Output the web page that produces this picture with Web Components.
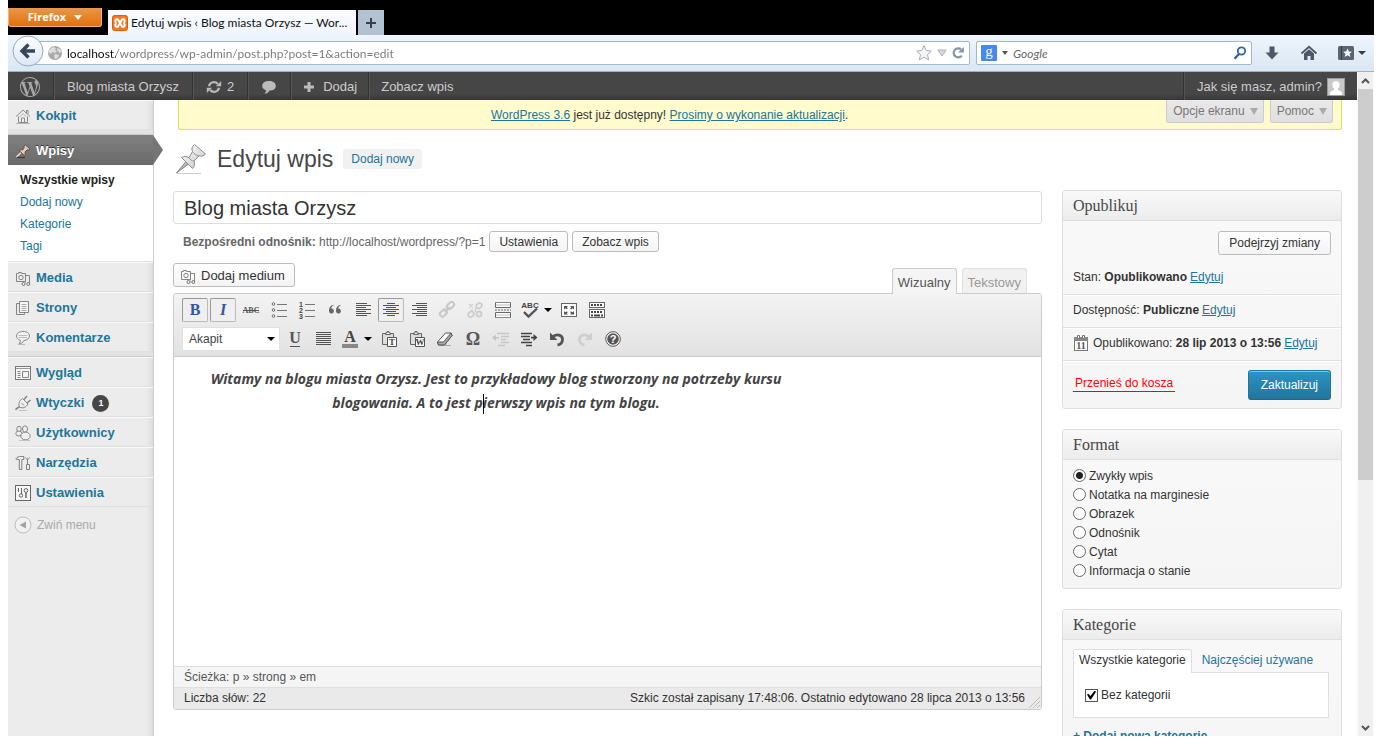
<!DOCTYPE html>
<html lang="pl">
<head>
<meta charset="utf-8">
<title>Edytuj wpis ‹ Blog miasta Orzysz — WordPress</title>
<style>
html { background: #fff; }
body { margin: 0 8px 8px; height: calc(100vh - 8px); overflow: hidden; font: 12px/16px "Liberation Sans", Arial, sans-serif; color: #333; }
</style>
</head>
<body>
<blog-desktop></blog-desktop>
<script>
const BASE = `
*, *::before, *::after { box-sizing: border-box; }
:host([hidden]) { display: none; }
button, input, select { font: inherit; color: inherit; margin: 0; }
button { cursor: pointer; padding: 0; border: 0; background: none; }
a { color: #21759b; }
ul { list-style: none; margin: 0; padding: 0; }
h1, h2, p { margin: 0; font-weight: normal; }
ui-icon { flex: none; }
.btn { height: 24px; padding: 0 10px; border: 1px solid #bbb; border-radius: 3px; color: #333; white-space: nowrap;
  background: linear-gradient(#fefefe, #f4f4f4); box-shadow: inset 0 1px 0 #fff; }
`;
function define(tag, css, html, init) {
  const tpl = document.createElement('template');
  tpl.innerHTML = `<style>${BASE}${css}</style>${html}`;
  customElements.define(tag, class extends HTMLElement {
    constructor() {
      super();
      this.attachShadow({ mode: 'open' }).append(tpl.content.cloneNode(true));
    }
    connectedCallback() { if (init) init.call(this, this.shadowRoot); }
  });
}

/* Rows of horizontal bars used by the alignment icons: [x, width] per line. */
const bars = (rows, color) => rows.map(([x, w], i) => `<rect x="${x}" y="${i * 2 + 1}" width="${w}" height="1" fill="${color}"/>`).join('');
const glyph = (w, h, body) => ({ w, h, body });
const serif = 'font-family="Liberation Serif, serif" font-weight="bold" text-anchor="middle"';
const sans = 'font-family="Liberation Sans, sans-serif" font-weight="bold" text-anchor="middle"';
const ICONS = {
  wordpress: glyph(20, 20, `<path transform="scale(.8333)" fill="#a9a9a9" d="M21.469 6.825c.84 1.537 1.318 3.3 1.318 5.175 0 3.979-2.156 7.456-5.363 9.325l3.295-9.527c.615-1.54.82-2.771.82-3.864 0-.405-.026-.78-.07-1.11m-7.981.105c.647-.03 1.232-.105 1.232-.105.582-.075.514-.93-.067-.899 0 0-1.755.135-2.88.135-1.064 0-2.85-.15-2.85-.15-.585-.03-.661.855-.075.885 0 0 .54.061 1.125.09l1.68 4.605-2.37 7.08L5.354 6.9c.649-.03 1.234-.1 1.234-.1.585-.075.516-.93-.065-.896 0 0-1.746.138-2.874.138-.2 0-.438-.008-.69-.015C4.911 3.15 8.235 1.215 12 1.215c2.809 0 5.365 1.072 7.286 2.833-.046-.003-.091-.009-.141-.009-1.06 0-1.812.923-1.812 1.914 0 .89.513 1.643 1.06 2.531.411.72.89 1.643.89 2.977 0 .915-.354 1.994-.821 3.479l-1.075 3.585-3.9-11.61.001.014zM12 22.784c-1.059 0-2.081-.153-3.048-.437l3.237-9.406 3.315 9.087c.024.053.05.101.078.149-1.12.393-2.325.609-3.582.609M1.211 12c0-1.564.336-3.05.935-4.39L7.29 21.709C3.694 19.96 1.212 16.271 1.211 12M12 0C5.385 0 0 5.385 0 12s5.385 12 12 12 12-5.385 12-12S18.615 0 12 0"/>`),
  refresh: glyph(16, 14, `<g fill="none" stroke="#b8b8b8" stroke-width="2.2"><path d="M3 6.2A5 5 0 0 1 11.8 4"/><path d="M13 7.8A5 5 0 0 1 4.2 10"/></g><path fill="#b8b8b8" d="M9.8 6.2h5.4V.9zM6.2 7.8H.8v5.3z"/>`),
  comment: glyph(16, 14, `<path fill="#bbb" d="M8 1c4 0 6.800 2 6.800 4.900S12 10.500 8.400 10.600C7.600 12.500 6 13.600 3.600 13.800 4.600 12.800 5 11.500 4.900 10.100 2.600 9.400 1.200 7.900 1.200 5.900 1.200 3 4 1 8 1z"/>`),
  plus: glyph(12, 12, `<path fill="#bbb" d="M4.500 1h3v3.500H11v3H7.500V11h-3V7.500H1v-3h3.500z"/>`),
  avatar: glyph(18, 18, `<rect width="18" height="18" fill="#9a9a9a"/><rect x="1" y="1" width="16" height="16" fill="#c9c9c9"/><path fill="#fff" d="M9 3c2.300 0 3.600 1.500 3.600 3.800 0 1.700-.6 3-1.600 3.800v1.200c0 .6 4 1.200 4 3.600V17H3v-1.600c0-2.400 4-3 4-3.600v-1.200C6 9.800 5.400 8.500 5.400 6.800 5.400 4.500 6.700 3 9 3z"/>`),
  xampp: glyph(16, 16, `<rect x=".5" y=".5" width="15" height="15" rx="2" fill="#f47920" stroke="#d95f10"/><path fill="none" stroke="#fff" stroke-width="2" stroke-linejoin="round" d="M6 4.500c-2.500-1-3.500 1-2 3.500-1.500 2.500-.5 4.500 2 3.500L10 4.500c2.500-1 3.500 1 2 3.500 1.500 2.500.5 4.500-2 3.500z"/>`),
  back: glyph(32, 32, `<defs><linearGradient id="g" x2="0" y2="1"><stop stop-color="#fdfeff"/><stop offset="1" stop-color="#dce7f4"/></linearGradient></defs><circle cx="16" cy="16" r="15" fill="url(#g)" stroke="#93a9c0"/><path fill="none" stroke="#36475a" stroke-width="3.400" d="M16.500 9.500l-6.500 6.500 6.500 6.500M10 16h13"/>`),
  globe: glyph(16, 16, `<circle cx="8" cy="8" r="7" fill="#a9a9a9"/><path fill="#dedede" d="M3 4l3-2 3 1-1 2 2 1-2 2-3-1-1 2-3-2zM10 3l3 1 1.500 3-2 1-2-2zM8 9l4 1-1 3-3 1-1-3z"/>`),
  star: glyph(18, 18, `<path fill="#f3f5f7" stroke="#a7afb8" d="M9 1.500l2.200 5 5.300.5-4 3.600 1.200 5.400L9 13.200 4.300 16l1.200-5.400-4-3.600 5.300-.5z"/>`),
  dropdown: glyph(10, 8, `<path fill="#d5dbe2" stroke="#a9b3bf" d="M.8 1h8.400L5 7z"/>`),
  reload: glyph(14, 14, `<path fill="none" stroke="#8794a4" stroke-width="2.200" d="M10.800 9.600A4.500 4.500 0 1 1 10 3.400"/><path fill="#8794a4" d="M7 6.600h5.900V1z"/>`),
  caret: glyph(6, 4, `<path fill="#555" d="M0 0h6L3 4z"/>`),
  caretdark: glyph(8, 4, `<path fill="#333d48" d="M0 0h8L4 4z"/>`),
  caretwhite: glyph(8, 5, `<path fill="#fff" d="M0 0h8L4 5z"/>`),
  caretgrey: glyph(8, 7, `<path fill="#aaa" d="M0 0h8L4 7z"/>`),
  caretblack: glyph(8, 4, `<path fill="#000" d="M0 0h8L4 4z"/>`),
  google: glyph(16, 16, `<rect width="16" height="16" rx="1" fill="#4787f0"/><text x="8" y="11" font-family="Liberation Serif, serif" text-anchor="middle" font-size="15" fill="#fff">g</text>`),
  search: glyph(14, 14, `<circle cx="8.500" cy="5" r="3.700" fill="none" stroke="#2c66a5" stroke-width="1.800"/><path stroke="#2c66a5" stroke-width="2.400" d="M6 8L1.500 12.800"/>`),
  download: glyph(16, 16, `<path fill="#4d5866" d="M5.500 1.500h5v6h4L8 14.500 1.500 7.500h4z"/>`),
  home: glyph(18, 16, `<path fill="none" stroke="#4d5866" stroke-width="1.800" d="M1.500 8.500L9 1.800l7.500 6.700"/><path fill="#4d5866" d="M4 8.500l5-4.200 5 4.200V15h-3.500v-4h-3v4H4z"/>`),
  bookmarks: glyph(16, 14, `<rect width="16" height="14" rx="1.500" fill="#5a6572"/><path stroke="#333d48" d="M3.500 0v14"/><path fill="#fff" d="M9.500 2.500l1.300 3 3.200.2-2.500 2 .9 3.200-2.900-1.700-2.800 1.700.8-3.200-2.400-2 3.200-.2z"/>`),
  newtab: glyph(12, 12, `<path fill="#36414d" d="M5 1h2v4h4v2H7v4H5V7H1V5h4z"/>`),
  dashboard: glyph(16, 16, `<g fill="none" stroke="#8a8a8a"><path d="M1 8.500L8 2l7 6.500"/><path d="M3.500 8.500v6h9v-6M6.500 14v-4h3v4M11.500 5V2.500h1.500V6"/><path d="M4.500 9L8 5.500 11.500 9" stroke="#b5b5b5"/></g><path stroke="#b5b5b5" d="M1 15.500h14"/>`),
  pinsmall: glyph(16, 16, `<path stroke="#f0e2dd" stroke-width="1.400" d="M1.500 14L6 9.500"/><path fill="#e6c9c1" stroke="#4c3b39" stroke-width=".8" d="M4 7.300c1.500-.8 2.600-.6 3.500-.2L9.200 4.800c-.4-1.200 0-2.200.9-3L15 6c-.8.900-1.800 1.100-2.800.8L9.900 9.100c.5 1.200.4 2.400-.5 3.500z"/><path stroke="#3d3432" stroke-width="1.200" d="M2 14.500h8"/>`),
  pinlarge: glyph(32, 32, `<defs><linearGradient id="p" x2="1" y2="1"><stop stop-color="#fff"/><stop offset="1" stop-color="#c4c4c4"/></linearGradient></defs><path fill="#bbb" stroke="#6f6f6f" stroke-width=".8" d="M1.500 30L11 18.500l2.500 2.500z"/><path fill="url(#p)" stroke="#8b8b8b" d="M6.500 14.500c3-1.500 5-1.300 7.500.2L17.500 8.500c-1.200-2.600-.5-5 2-7L30.500 11c-1.800 2-4 2.600-6.500 1.800L19 18c1 2.800.6 5-1.500 7.500z"/><path stroke="#999" fill="none" d="M17.500 8.500c1.500 2.500 3.500 3.800 6.500 4.300M14 14.700c1 2 2.500 3 5 3.300"/><path stroke="#ccc" d="M2 30.500h24"/>`),
  media: glyph(16, 16, `<g fill="none" stroke="#858585"><path d="M1.500 3.500h2v-1h3v1h4v8h-9z"/><circle cx="6" cy="7.500" r="2.200"/><path d="M10.500 5.500h4v8M10.500 12.500v-1"/></g><g fill="#eee" stroke="#777"><circle cx="8.500" cy="14" r="1.500"/><circle cx="13.300" cy="14" r="1.500"/></g>`),
  pages: glyph(16, 16, `<g fill="#e9e9e9" stroke="#858585"><path d="M1.500 3.500h8v11h-8z"/><path d="M4.500 1.500h9v11h-9z" fill="#f6f6f6"/></g><path stroke="#a9a9a9" d="M6.500 4.500h5M6.500 6.500h5M6.500 8.500h5M6.500 10.500h5"/>`),
  comments: glyph(16, 16, `<path fill="#f2f2f2" stroke="#888" d="M8 1.500c4 0 6.500 1.800 6.500 4.400S12 10.400 8.800 10.500C8 12.500 6.500 13.600 4 14c1-1.200 1.400-2.300 1.300-3.800C3 9.500 1.500 8 1.500 5.900 1.500 3.300 4 1.500 8 1.500z"/><path stroke="#bbb" d="M3.500 5.500h9M4 7.500h8M3 14.500h7"/>`),
  appearance: glyph(16, 16, `<rect x=".5" y="1.500" width="15" height="13" fill="#f6f6f6" stroke="#777"/><path stroke="#999" d="M1 3.500h14"/><g fill="none" stroke="#858585"><path d="M2.500 6.500h3M2.500 8.500h3M2.500 10.500h3M2.500 12.500h3"/><path d="M7.500 6.500h6v6h-6z"/></g>`),
  plugins: glyph(16, 16, `<g fill="none" stroke="#858585"><path stroke-width="1.600" d="M.8 15c.4-2.500 2-1.500 3.700-3.500"/><path fill="#f0f0f0" d="M4.500 12C3 8.500 4.500 5.500 7.500 3.500L13 9c-2 3.500-5 4.800-8.500 3z"/><path stroke-width="1.500" d="M9 4.500L12 1M12 8l3.500-3"/><path d="M6.500 8l2.500 2.500"/></g><path stroke="#c3c3c3" d="M4 15.500h8"/>`),
  users: glyph(16, 16, `<g fill="#f0f0f0" stroke="#858585"><ellipse cx="4" cy="4" rx="2.200" ry="2.700"/><ellipse cx="3.800" cy="8.500" rx="3" ry="2.500"/><ellipse cx="10" cy="4" rx="2.500" ry="3.200"/><ellipse cx="10.500" cy="11" rx="4.700" ry="3.800"/></g><path stroke="#c3c3c3" d="M4 15.500h11"/>`),
  tools: glyph(16, 16, `<g fill="#eee" stroke="#808080"><path d="M.8 4c1-2 3-2.500 5-2.500h3v3h-2v10h-2.500v-10H3z"/><path d="M12.500 9V2.500M11.500 9.500h3v5h-3z"/><path d="M10.500 2.500c0 2 4 2 4 0"/></g>`),
  settings: glyph(16, 16, `<rect x=".5" y=".5" width="15" height="15" fill="#f6f6f6" stroke="#666"/><g fill="none" stroke="#666"><path d="M3.500 3v4M6.500 3v6"/><circle cx="6" cy="10.500" r="1.700"/><circle cx="11" cy="5.500" r="1.900"/><path d="M11 7.500V13" stroke-width="1.500"/></g>`),
  collapse: glyph(18, 18, `<circle cx="9" cy="9" r="8" fill="#f1f1f1" stroke="#bdbdbd"/><path fill="#a3a3a3" d="M12 5.500v7L5.500 9z"/>`),
  calendar: glyph(16, 18, `<rect x="1.500" y="4.500" width="13" height="12" fill="#fff" stroke="#777"/><rect x="1" y="3" width="14" height="4" fill="#888"/><path stroke="#777" fill="#fff" d="M4.500 1.500h2v3h-2zM9.500 1.500h2v3h-2z"/><text x="8" y="15" ${serif} font-size="10" fill="#555">11</text>`),
  scrollup: glyph(9, 6, `<path fill="none" stroke="#555" stroke-width="2" d="M1 5l3.500-3.500L8 5"/>`),
  scrolldown: glyph(9, 6, `<path fill="none" stroke="#555" stroke-width="2" d="M1 1l3.500 3.500L8 1"/>`),
  grip: glyph(12, 12, `<path stroke="#bbb" d="M1 12L12 1M5 12l7-7M9 12l3-3"/>`),
  bold: glyph(20, 20, `<text x="10" y="15" ${serif} font-size="16" fill="#3455a4">B</text>`),
  italic: glyph(20, 20, `<text x="10" y="15" ${serif} font-style="italic" font-size="16" fill="#3455a4">I</text>`),
  strike: glyph(20, 20, `<text x="10" y="13" ${serif} font-size="8" fill="#555">ABC</text><path stroke="#555" d="M2 10.500h16"/>`),
  bullets: glyph(20, 20, `<g fill="#fff" stroke="#666"><circle cx="4.500" cy="4" r="1.300"/><circle cx="4.500" cy="10" r="1.300"/><circle cx="4.500" cy="16" r="1.300"/></g><path stroke="#777" d="M8 4.500h10M8 10.500h10M8 16.500h10"/>`),
  numbers: glyph(20, 20, `<g font-size="7" fill="#444" ${sans}><text x="4" y="7">1</text><text x="4" y="13">2</text><text x="4" y="19">3</text></g><path stroke="#777" d="M8 4.500h10M8 10.500h10M8 16.500h10"/>`),
  quote: glyph(20, 20, `<path fill="#666" d="M8.500 5.500c-1.500.5-2.200 1.600-2.200 3 1.700 0 2.600 1 2.600 2.400S7.900 13.500 6.500 13.500C4.800 13.500 4 12.200 4 10.500c0-2.900 1.600-5 4.500-5.700zM15.500 5.500c-1.500.5-2.200 1.600-2.200 3 1.700 0 2.600 1 2.600 2.400s-1 2.600-2.400 2.600c-1.700 0-2.500-1.300-2.500-3 0-2.900 1.600-5 4.500-5.700z"/>`),
  left: glyph(16, 16, bars([[1, 11], [1, 15], [1, 10], [1, 15], [1, 10], [1, 15], [1, 11]], '#555')),
  center: glyph(16, 16, bars([[4, 8], [0, 16], [3, 10], [0, 16], [3, 10], [0, 16], [4, 8]], '#2f56ae')),
  right: glyph(16, 16, bars([[5, 11], [1, 15], [6, 10], [1, 15], [6, 10], [1, 15], [5, 11]], '#555')),
  justify: glyph(16, 16, bars([[1, 15], [1, 15], [1, 15], [1, 15], [1, 15], [1, 15], [1, 15]], '#555')),
  link: glyph(18, 18, `<g fill="none" stroke="#c9c9c9" stroke-width="2"><rect x="8.500" y="2" width="8" height="5" rx="2.500" transform="rotate(-45 12.500 4.500)"/><rect x="1.500" y="9.500" width="8" height="5" rx="2.500" transform="rotate(-45 5.500 12)"/><path d="M6.500 11L12 6"/></g>`),
  unlink: glyph(18, 18, `<g fill="none" stroke="#cdcdcd" stroke-width="1.800"><rect x="10" y="2.500" width="6" height="4.500" rx="2.200" transform="rotate(-45 13 4.800)"/><rect x="2" y="11" width="6" height="4.500" rx="2.200" transform="rotate(-45 5 13.200)"/><circle cx="13" cy="13" r="2.500"/></g><path stroke="#cdcdcd" stroke-width="1.200" d="M3 3l4 4M7 3L3 7M9.500 7v4M5 9h2"/>`),
  more: glyph(18, 18, `<g fill="#fff" stroke="#666"><path d="M1.500 1v5.500h15V1M1.500 17v-5.500h15V17"/></g><path stroke="#666" stroke-dasharray="2 1" d="M1 9h16"/><path stroke="#888" d="M1 1.500h16M1 16.500h16"/><path stroke="#bbb" d="M2 4h14M2 14h14"/>`),
  spell: glyph(20, 20, `<text x="10" y="8" ${sans} font-size="8" fill="#444">ABC</text><path fill="none" stroke="#555" stroke-width="2.400" d="M4 12l4.500 4.500L17 8.500"/>`),
  fullscreen: glyph(16, 16, `<rect x=".5" y="1.500" width="15" height="13" fill="#fff" stroke="#666"/><path fill="#555" d="M3 4h4L5.700 5.300 7 6.600 5.600 7 4.300 6.300 3 7.500zM13 4v3.500l-1.300-1.200L10 7.500l-1-.9 1.300-1.300L9 4zM3 12.500V9l1.300 1.200L5.600 9.500l1.400.4-1.300 1.300L7 12.500zM13 12.500H9l1.300-1.300L9 9.900l1-.4 1.700.7L13 9z"/>`),
  kitchen: glyph(18, 18, `<g fill="#fff" stroke="#666"><rect x="1.500" y="1.500" width="15" height="5"/><rect x="1.500" y="8.500" width="15" height="8"/></g><path stroke="#444" stroke-width="2" stroke-dasharray="2 1" d="M3 4h12M3 11h12"/><path stroke="#444" stroke-width="2" d="M3 14.500h2M6 14.500h6M13 14.500h2"/>`),
  underline: glyph(20, 20, `<text x="10" y="14" ${serif} font-size="16" fill="#555">U</text><path stroke="#555" d="M5 17.500h10"/>`),
  color: glyph(20, 20, `<text x="10" y="13" ${serif} font-size="16" fill="#444">A</text><rect x="2" y="15" width="16" height="4" fill="#888"/>`),
  pastetext: glyph(18, 18, `<path fill="#ddd" stroke="#666" d="M2.500 3.500h11v11h-11z"/><path fill="#eee" stroke="#666" d="M5.500 4.500V3h1.500V1.500h2V3h1.500v1.500z"/><path fill="#fff" stroke="#555" d="M7.500 7.500h9v9h-9z"/><text x="12" y="15" ${serif} font-size="9" fill="#444">T</text>`),
  pasteword: glyph(18, 18, `<path fill="#ddd" stroke="#666" d="M2.500 3.500h11v11h-11z"/><path fill="#eee" stroke="#666" d="M5.500 4.500V3h1.500V1.500h2V3h1.500v1.500z"/><path fill="#fff" stroke="#555" d="M7.500 7.500h9v9h-9z"/><text x="12" y="15" ${serif} font-size="9" fill="#444">W</text>`),
  eraser: glyph(18, 18, `<path fill="#fff" stroke="#555" d="M1.500 12L9.500 3h5.500l1 2.500-7.500 9.500H2.500z"/><path fill="#aaa" stroke="#555" d="M1.500 12h6L15 3l1 2.500-7.500 9.500H2.500z"/><path stroke="#aaa" d="M8 15.500h7"/>`),
  omega: glyph(20, 20, `<text x="10" y="16" ${serif} font-size="18" fill="#555">Ω</text>`),
  outdent: glyph(18, 18, `<path fill="none" stroke="#c6c6c6" stroke-width="1.600" d="M5 3.500h12M9 6.500h8M9 9.500h5M9 12.500h8M6 15.500h7"/><path fill="#c6c6c6" d="M0 7.500l4-3V7h3v1.500H4v2.500z"/>`),
  indent: glyph(18, 18, `<path fill="none" stroke="#444" stroke-width="1.700" d="M1 3.500h11M1 6.500h9M3 9.500h7M1 12.500h11M6 15.500h6"/><path fill="#444" d="M17.500 7.500l-4-3.500v2.700H11v1.700h2.500V11z"/>`),
  undo: glyph(18, 18, `<path fill="none" stroke="#555" stroke-width="2.800" d="M4.500 7c4-4 10-2 10 2.200 0 3-2 5.300-5 5.800"/><path fill="#555" d="M2 2.500V10h7.500z"/>`),
  redo: glyph(18, 18, `<path fill="none" stroke="#cfcfcf" stroke-width="2.800" d="M13.500 7c-4-4-10-2-10 2.200 0 3 2 5.300 5 5.800"/><path fill="#cfcfcf" d="M16 2.500V10H8.500z"/>`),
  help: glyph(18, 18, `<circle cx="9" cy="9" r="7.300" fill="#fff" stroke="#555"/><circle cx="9" cy="9" r="5.800" fill="#555"/><text x="9" y="13" ${sans} font-size="11" fill="#fff">?</text>`)
};
customElements.define('ui-icon', class extends HTMLElement {
  connectedCallback() {
    if (this.shadowRoot) return;
    const icon = ICONS[this.getAttribute('name')];
    this.attachShadow({ mode: 'open' }).innerHTML =
      `<style>:host { display: inline-block; line-height: 0; } svg { display: block; }</style>
       <svg width="${icon.w}" height="${icon.h}" viewBox="0 0 ${icon.w} ${icon.h}" aria-hidden="true">${icon.body}</svg>`;
  }
});

define('browser-tabs', `
:host { display: flex; height: 35px; background: #000; align-items: flex-end; font: 12px/16px Lato, "Noto Sans", sans-serif; }
.menu { align-self: flex-start; margin: 8px 6px 0 0; width: 94px; height: 19px; border: 1px solid #f6b56a; border-top: 0; border-radius: 0 0 3px 3px;
  background: linear-gradient(#e9984a, #e2700c); color: #fff; font: bold 11px/16px "Open Sans", sans-serif; display: flex; align-items: center; justify-content: center; gap: 8px; }
.tab { width: 248px; height: 25px; padding: 0 4px; background: linear-gradient(#fafcff, #eef5fc); color: #111; display: flex; align-items: center; gap: 3px; margin-right: 2px; }
.tab span { white-space: nowrap; }
.new { width: 26px; height: 25px; background: #b3c2d1; display: grid; place-items: center; }
`, `
<button class="menu">Firefox <ui-icon name="caretwhite"></ui-icon></button>
<div class="tab"><ui-icon name="xampp"></ui-icon><span>Edytuj wpis ‹ Blog miasta Orzysz — Wor...</span></div>
<button class="new" aria-label="Nowa karta"><ui-icon name="newtab"></ui-icon></button>`);

define('browser-toolbar', `
:host { display: flex; align-items: center; height: 37px; padding: 0 6px 0 4px; background: linear-gradient(#eef5fc, #dbe7f4); border-bottom: 1px solid #9fb0c2;
  font: 12px/16px Lato, "Noto Sans", sans-serif; }
.back { z-index: 1; margin-right: -14px; }
.field { display: flex; align-items: center; height: 24px; border: 1px solid #a5b6c8; background: #fff; border-radius: 2px; }
.url { flex: 1; padding: 0 4px 0 16px; gap: 4px; margin-right: 6px; }
input { flex: 1; min-width: 0; border: 0; outline: 0; padding: 0; height: 20px; background: none; }
.url input { background: linear-gradient(90deg, #111 49px, #777 49px); -webkit-background-clip: text; background-clip: text; -webkit-text-fill-color: transparent; }
.find { width: 276px; padding: 0 4px; gap: 5px; }
.find input::placeholder { color: #666; opacity: 1; font-style: italic; }
.tools { display: flex; align-items: center; gap: 20px; margin: 0 2px 0 12px; }
.tools button { display: flex; align-items: center; gap: 4px; }
`, `
<button class="back" aria-label="Wstecz"><ui-icon name="back"></ui-icon></button>
<div class="field url"><ui-icon name="globe"></ui-icon>
<input aria-label="Adres" value="localhost/wordpress/wp-admin/post.php?post=1&amp;action=edit">
<ui-icon name="star"></ui-icon><ui-icon name="dropdown"></ui-icon><ui-icon name="reload"></ui-icon></div>
<div class="field find"><ui-icon name="google"></ui-icon><ui-icon name="caret"></ui-icon>
<input aria-label="Szukaj" placeholder="Google"><ui-icon name="search"></ui-icon></div>
<div class="tools">
<button aria-label="Pobrane"><ui-icon name="download"></ui-icon></button>
<button aria-label="Strona startowa"><ui-icon name="home"></ui-icon></button>
<button aria-label="Zakładki"><ui-icon name="bookmarks"></ui-icon><ui-icon name="caretdark"></ui-icon></button></div>`);

define('admin-bar', `
:host { display: flex; height: 28px; flex: none; background: linear-gradient(#464646 22px, #373737); font-size: 13px; color: #ccc; }
a { display: flex; align-items: center; gap: 5px; padding: 2px 13px 0 12px; color: inherit; text-decoration: none; border-right: 1px solid #333; box-shadow: 1px 0 0 #555; margin-right: 1px; white-space: nowrap; }
.me { margin: 0 0 0 auto; border-right: 0; border-left: 1px solid #555; box-shadow: -1px 0 0 #333; padding: 2px 12px 0 12px; }
.new { gap: 8px; padding: 2px 11px 0; }
.last { border-right: 0; box-shadow: none; padding-left: 11px; }
`, `
<a href="#" aria-label="WordPress"><ui-icon name="wordpress"></ui-icon></a>
<a href="#">Blog miasta Orzysz</a>
<a href="#"><ui-icon name="refresh"></ui-icon>2</a>
<a href="#" aria-label="Komentarze"><ui-icon name="comment"></ui-icon></a>
<a href="#" class="new"><ui-icon name="plus"></ui-icon>Dodaj</a>
<a href="#" class="last">Zobacz wpis</a>
<a href="#" class="me">Jak się masz, admin? <ui-icon name="avatar"></ui-icon></a>`);

define('menu-item', `
:host { display: block; }
a { position: relative; display: flex; align-items: center; gap: 5px; height: 30px; padding: 2px 0 0 7px; border-top: 1px solid #f9f9f9; border-bottom: 1px solid #dfdfdf;
  font-size: 13px; font-weight: bold; text-decoration: none; }
:host([current]) a { color: #fff; background: linear-gradient(#808080, #6a6a6a); border-top-color: #808080; border-bottom-color: #6a6a6a; text-shadow: 0 -1px 0 #333; }
:host([current]) a::after { content: ""; position: absolute; left: 100%; top: -1px; width: 10px; height: 30px; background: #757575; clip-path: polygon(0 0, 100% 50%, 0 100%); }
`, `<a href="#"><slot></slot></a>`, function (root) {
  const icon = document.createElement('ui-icon');
  icon.setAttribute('name', this.getAttribute('icon'));
  root.querySelector('a').prepend(icon);
});

define('admin-menu', `
:host { display: block; flex: none; width: 146px; background: #ececec; border-right: 1px solid #ccc; box-shadow: inset -8px 0 6px -6px #d6d6d6; }
.gap { height: 5px; border-bottom: 1px solid #ccc; background: #e3e3e3; }
ul { background: #fff; padding: 4px 0; border-bottom: 1px solid #dfdfdf; }
li { height: 22px; line-height: 22px; padding-left: 12px; }
li a { text-decoration: none; }
li .on { color: #222; font-weight: bold; }
.count { margin-left: 3px; width: 17px; height: 17px; border-radius: 9px; background: #464646; color: #fff; font-size: 9px; line-height: 17px; text-align: center; }
.fold { display: flex; align-items: center; gap: 5px; margin: 8px 0 0 6px; height: 20px; color: #aaa; font-size: 12px; }
`, `
<menu-item icon="dashboard">Kokpit</menu-item><div class="gap"></div>
<menu-item icon="pinsmall" current>Wpisy</menu-item>
<ul><li><a href="#" class="on">Wszystkie wpisy</a></li><li><a href="#">Dodaj nowy</a></li><li><a href="#">Kategorie</a></li><li><a href="#">Tagi</a></li></ul>
<menu-item icon="media">Media</menu-item>
<menu-item icon="pages">Strony</menu-item>
<menu-item icon="comments">Komentarze</menu-item><div class="gap"></div>
<menu-item icon="appearance">Wygląd</menu-item>
<menu-item icon="plugins">Wtyczki <span class="count">1</span></menu-item>
<menu-item icon="users">Użytkownicy</menu-item>
<menu-item icon="tools">Narzędzia</menu-item>
<menu-item icon="settings">Ustawienia</menu-item>
<button class="fold"><ui-icon name="collapse"></ui-icon>Zwiń menu</button>`);

define('update-nag', `
:host { display: flex; height: 30px; margin-left: 5px; padding: 0 8px; background: #fffbcc; border: 1px solid #e6db55; border-top: 0; border-radius: 0 0 3px 3px; }
p { flex: 1; text-align: center; line-height: 30px; padding-right: 8px; }
button { height: 23px; margin-left: 6px; padding: 0 5px 0 6px; display: flex; align-items: center; gap: 5px; border: 1px solid #ccc; border-top: 0; border-radius: 0 0 3px 3px;
  background: linear-gradient(#e9e9e9, #dfdfdf); color: #777; }
`, `<p><a href="#">WordPress 3.6</a> jest już dostępny! <a href="#">Prosimy o wykonanie aktualizacji</a>.</p>
<button>Opcje ekranu <ui-icon name="caretgrey"></ui-icon></button><button>Pomoc <ui-icon name="caretgrey"></ui-icon></button>`);

define('page-title', `
:host { display: flex; align-items: center; height: 60px; padding: 0 0 3px 2px; gap: 10px; }
h1 { font-size: 23px; line-height: 30px; color: #464646; }
a { height: 20px; line-height: 20px; padding: 0 8px; background: #f1f1f1; border-radius: 3px; text-decoration: none; }
`, `<ui-icon name="pinlarge"></ui-icon><h1><slot></slot></h1><a href="#">Dodaj nowy</a>`);

define('editor-toolbar', `
:host { display: flex; flex-direction: column; gap: 5px; padding: 4px 8px 5px; background: linear-gradient(#f3f3f3, #e2e2e2); border-bottom: 1px solid #ccc; }
div { display: flex; gap: 2px; height: 24px; }
button { width: 26px; display: flex; align-items: center; justify-content: center; gap: 4px; border: 1px solid transparent; border-radius: 2px; }
button[aria-pressed=true] { border-color: #999 #bbb #bbb #999; background: #efefef; }
.split { width: 36px; }
label { display: grid; width: 98px; align-items: center; }
select { grid-area: 1 / 1; width: 98px; height: 24px; padding: 0 6px; appearance: none; border: 1px solid #e0e0e0; border-radius: 0; background: #fff; color: #444; }
label ui-icon { grid-area: 1 / 1; justify-self: end; margin-right: 5px; pointer-events: none; z-index: 1; }
`, `
<div>
<button aria-pressed="true" aria-label="Pogrubienie"><ui-icon name="bold"></ui-icon></button>
<button aria-pressed="true" aria-label="Kursywa"><ui-icon name="italic"></ui-icon></button>
<button aria-label="Przekreślenie"><ui-icon name="strike"></ui-icon></button>
<button aria-label="Lista wypunktowana"><ui-icon name="bullets"></ui-icon></button>
<button aria-label="Lista numerowana"><ui-icon name="numbers"></ui-icon></button>
<button aria-label="Cytat"><ui-icon name="quote"></ui-icon></button>
<button aria-label="Do lewej"><ui-icon name="left"></ui-icon></button>
<button aria-pressed="true" aria-label="Wyśrodkuj"><ui-icon name="center"></ui-icon></button>
<button aria-label="Do prawej"><ui-icon name="right"></ui-icon></button>
<button aria-label="Wstaw odnośnik"><ui-icon name="link"></ui-icon></button>
<button aria-label="Usuń odnośnik"><ui-icon name="unlink"></ui-icon></button>
<button aria-label="Znacznik Więcej"><ui-icon name="more"></ui-icon></button>
<button class="split" aria-label="Pisownia"><ui-icon name="spell"></ui-icon><ui-icon name="caretblack"></ui-icon></button>
<button aria-label="Pełny ekran"><ui-icon name="fullscreen"></ui-icon></button>
<button aria-label="Więcej opcji"><ui-icon name="kitchen"></ui-icon></button>
</div>
<div>
<label><select aria-label="Format akapitu"><option>Akapit</option></select><ui-icon name="caretblack"></ui-icon></label>
<button aria-label="Podkreślenie"><ui-icon name="underline"></ui-icon></button>
<button aria-label="Wyjustuj"><ui-icon name="justify"></ui-icon></button>
<button class="split" aria-label="Kolor tekstu"><ui-icon name="color"></ui-icon><ui-icon name="caretblack"></ui-icon></button>
<button aria-label="Wklej jako tekst"><ui-icon name="pastetext"></ui-icon></button>
<button aria-label="Wklej z Worda"><ui-icon name="pasteword"></ui-icon></button>
<button aria-label="Usuń formatowanie"><ui-icon name="eraser"></ui-icon></button>
<button aria-label="Znaki specjalne"><ui-icon name="omega"></ui-icon></button>
<button aria-label="Zmniejsz wcięcie"><ui-icon name="outdent"></ui-icon></button>
<button aria-label="Zwiększ wcięcie"><ui-icon name="indent"></ui-icon></button>
<button aria-label="Cofnij"><ui-icon name="undo"></ui-icon></button>
<button aria-label="Ponów"><ui-icon name="redo"></ui-icon></button>
<button aria-label="Pomoc"><ui-icon name="help"></ui-icon></button>
</div>`);

define('post-editor', `
:host { display: block; flex: 1; min-width: 0; padding-top: 1px; }
.title { width: 100%; height: 33px; padding: 2px 10px 0; font-size: 20px; border: 1px solid #ddd; border-radius: 3px; color: #333; outline: 0; background: #fff; }
.permalink { display: flex; align-items: center; gap: 4px; margin: 7px 0 11px 10px; color: #666; }
.permalink .btn { height: 21px; padding: 0 9px; }
.tools { display: flex; height: 30px; justify-content: space-between; align-items: flex-start; padding-right: 15px; }
.media { display: flex; align-items: center; gap: 5px; padding: 2px 9px 0 6px; font-size: 13px; }
.tabs { display: flex; gap: 5px; align-self: flex-end; z-index: 1; }
.tabs button { height: 25px; padding: 4px 5px 0; font-size: 13px; border: 1px solid #dfdfdf; border-bottom: 0; border-radius: 3px 3px 0 0; background: #f1f1f1; color: #999; }
.tabs .on { height: 26px; margin-bottom: -1px; padding-top: 3px; border-color: #ccc; background: #f4f4f4; color: #555; }
.frame { border: 1px solid #ccc; border-radius: 3px; overflow: hidden; background: #fff; }
.text { min-height: 309px; padding: 10px 20px; outline: 0; }
.text p { position: relative; max-width: 604px; font: italic bold 14px/24px "Open Sans", "Noto Sans", sans-serif; text-align: center; color: #444; }
.text p::after { content: ""; position: absolute; left: 289px; top: 27px; width: 1px; height: 20px; background: #000; }
.path { height: 21px; line-height: 20px; padding: 0 10px; border-top: 1px solid #dfdfdf; background: #f5f5f5; color: #555; }
.status { display: flex; justify-content: space-between; height: 22px; line-height: 20px; padding: 0 0 0 10px; border-top: 1px solid #dfdfdf; background: #eaeaea; }
.status span:last-of-type { margin-left: auto; }
.status ui-icon { align-self: flex-end; margin: 0 1px 1px 3px; }
`, `
<input class="title" aria-label="Tytuł wpisu" value="Blog miasta Orzysz">
<div class="permalink"><span><b>Bezpośredni odnośnik:</b> http://localhost/wordpress/?p=1</span><button class="btn">Ustawienia</button><button class="btn">Zobacz wpis</button></div>
<div class="tools"><button class="btn media"><ui-icon name="media"></ui-icon>Dodaj medium</button>
<div class="tabs"><button class="on">Wizualny</button><button>Tekstowy</button></div></div>
<div class="frame"><editor-toolbar></editor-toolbar>
<div class="text" role="textbox" aria-label="Treść wpisu" contenteditable="true" spellcheck="false"><p>Witamy na blogu miasta Orzysz. Jest to przykładowy blog stworzony na potrzeby kursu blogowania. A to jest pierwszy wpis na tym blogu.</p></div>
<div class="path">Ścieżka: p » strong » em</div>
<div class="status"><span>Liczba słów: 22</span><span>Szkic został zapisany 17:48:06. Ostatnio edytowano 28 lipca 2013 o 13:56</span><ui-icon name="grip"></ui-icon></div></div>`);

define('meta-box', `
:host { display: block; border: 1px solid #dfdfdf; border-radius: 3px; background: linear-gradient(#f9f9f9, #f5f5f5); }
h2 { height: 30px; padding: 0 10px; font: 16px/29px "Liberation Serif", Georgia, serif; color: #464646; background: linear-gradient(#f9f9f9, #ececec); border-bottom: 1px solid #dfdfdf; border-radius: 2px 2px 0 0; }
`, `<h2></h2><slot></slot>`, function (root) { root.querySelector('h2').textContent = this.getAttribute('heading'); });

define('publish-box', `
:host { display: block; }
.preview { display: flex; justify-content: flex-end; padding: 10px 10px 6px; }
.row { display: flex; align-items: center; height: 33px; gap: 3px; padding: 0 10px 2px; border-top: 1px solid #dfdfdf; box-shadow: inset 0 1px 0 #fff; white-space: nowrap; }
.row.first { border-top: 0; box-shadow: none; }
.row ui-icon { margin-right: 1px; }
.foot { display: flex; align-items: center; justify-content: space-between; padding: 9px 10px 8px; border-top: 1px solid #dfdfdf; box-shadow: inset 0 1px 0 #fff; }
.trash { color: #f00; border-bottom: 1px solid #f00; text-decoration: none; padding: 0 2px; margin-bottom: 4px; }
.save { height: 30px; padding: 0 12px; border: 1px solid #21759b; border-bottom-color: #1e6a8d; border-radius: 3px; background: linear-gradient(#2a95c5, #21759b); color: #fff; box-shadow: inset 0 1px 0 #78c8e6; }
`, `
<meta-box heading="Opublikuj">
<div class="preview"><button class="btn">Podejrzyj zmiany</button></div>
<div class="row first"><span>Stan: <b>Opublikowano</b></span><a href="#">Edytuj</a></div>
<div class="row"><span>Dostępność: <b>Publiczne</b></span><a href="#">Edytuj</a></div>
<div class="row"><ui-icon name="calendar"></ui-icon><span>Opublikowano: <b>28 lip 2013 o 13:56</b></span><a href="#">Edytuj</a></div>
<div class="foot"><a href="#" class="trash">Przenieś do kosza</a><button class="save">Zaktualizuj</button></div>
</meta-box>`);

define('format-box', `
:host { display: block; }
.list { padding: 6px 10px 8px; }
label { display: flex; align-items: center; gap: 3px; height: 19px; }
input { appearance: none; width: 13px; height: 13px; border: 1px solid #666; border-radius: 7px; background: #fff; }
input:checked { background: radial-gradient(circle, #222 3px, #fff 4px); }
`, `
<meta-box heading="Format"><div class="list">
<label><input type="radio" name="format" checked>Zwykły wpis</label>
<label><input type="radio" name="format">Notatka na marginesie</label>
<label><input type="radio" name="format">Obrazek</label>
<label><input type="radio" name="format">Odnośnik</label>
<label><input type="radio" name="format">Cytat</label>
<label><input type="radio" name="format">Informacja o stanie</label>
</div></meta-box>`);

define('category-box', `
:host { display: block; }
.wrap { padding: 9px 12px 20px 10px; }
.tabs { display: flex; }
.tabs a { height: 23px; line-height: 22px; padding: 0 10px; text-decoration: none; }
.tabs .on { height: 24px; margin-bottom: -1px; padding: 0 5px; border: 1px solid #dfdfdf; border-bottom: 0; border-radius: 3px 3px 0 0; background: #fff; color: #333; z-index: 1; line-height: 20px; }
.panel { height: 46px; padding: 0 11px; border: 1px solid #dfdfdf; background: #fff; display: flex; align-items: center; }
label { display: flex; align-items: center; gap: 3px; }
input { appearance: none; width: 13px; height: 13px; border: 1px solid #555; background: #fff; display: grid; place-items: center; }
input:checked::before { content: ""; width: 9px; height: 9px; background: #000; clip-path: polygon(0 45%, 15% 35%, 38% 60%, 85% 0, 100% 15%, 45% 100%, 32% 100%); }
.add { display: block; margin-top: 10px; font-weight: bold; text-decoration: none; }
`, `
<meta-box heading="Kategorie"><div class="wrap">
<div class="tabs"><a href="#" class="on">Wszystkie kategorie</a><a href="#">Najczęściej używane</a></div>
<div class="panel"><label><input type="checkbox" checked>Bez kategorii</label></div>
<a href="#" class="add">+ Dodaj nową kategorię</a>
</div></meta-box>`);

define('scroll-rail', `
:host { display: flex; flex-direction: column; flex: none; width: 17px; background: #f0f0f0; border: solid #fafafa; border-width: 0 1px; }
button { height: 17px; display: grid; place-items: center; }
.track { flex: 1; }
.thumb { height: 62%; background: #cdcdcd; }
`, `<button aria-label="Przewiń w górę" tabindex="-1"><ui-icon name="scrollup"></ui-icon></button>
<div class="track"><div class="thumb"></div></div>
<button aria-label="Przewiń w dół" tabindex="-1"><ui-icon name="scrolldown"></ui-icon></button>`);

define('blog-desktop', `
:host { display: flex; flex-direction: column; height: 100%; }
browser-tabs, browser-toolbar { flex: none; }
.view { display: flex; flex: 1; min-height: 0; }
.page { display: flex; flex-direction: column; flex: 1; min-width: 0; }
.body { display: flex; flex: 1; min-height: 0; overflow: hidden; }
main { flex: 1; min-width: 0; padding: 0 15px 0 19px; }
.columns { display: flex; gap: 20px; align-items: flex-start; }
aside { flex: none; width: 280px; display: flex; flex-direction: column; gap: 20px; }
`, `
<browser-tabs></browser-tabs>
<browser-toolbar></browser-toolbar>
<div class="view">
<div class="page"><admin-bar></admin-bar>
<div class="body"><admin-menu></admin-menu>
<main><update-nag></update-nag><page-title>Edytuj wpis</page-title>
<div class="columns"><post-editor></post-editor>
<aside><publish-box></publish-box><format-box></format-box><category-box></category-box></aside></div></main></div></div>
<scroll-rail></scroll-rail></div>`);
</script>
</body>
</html>
